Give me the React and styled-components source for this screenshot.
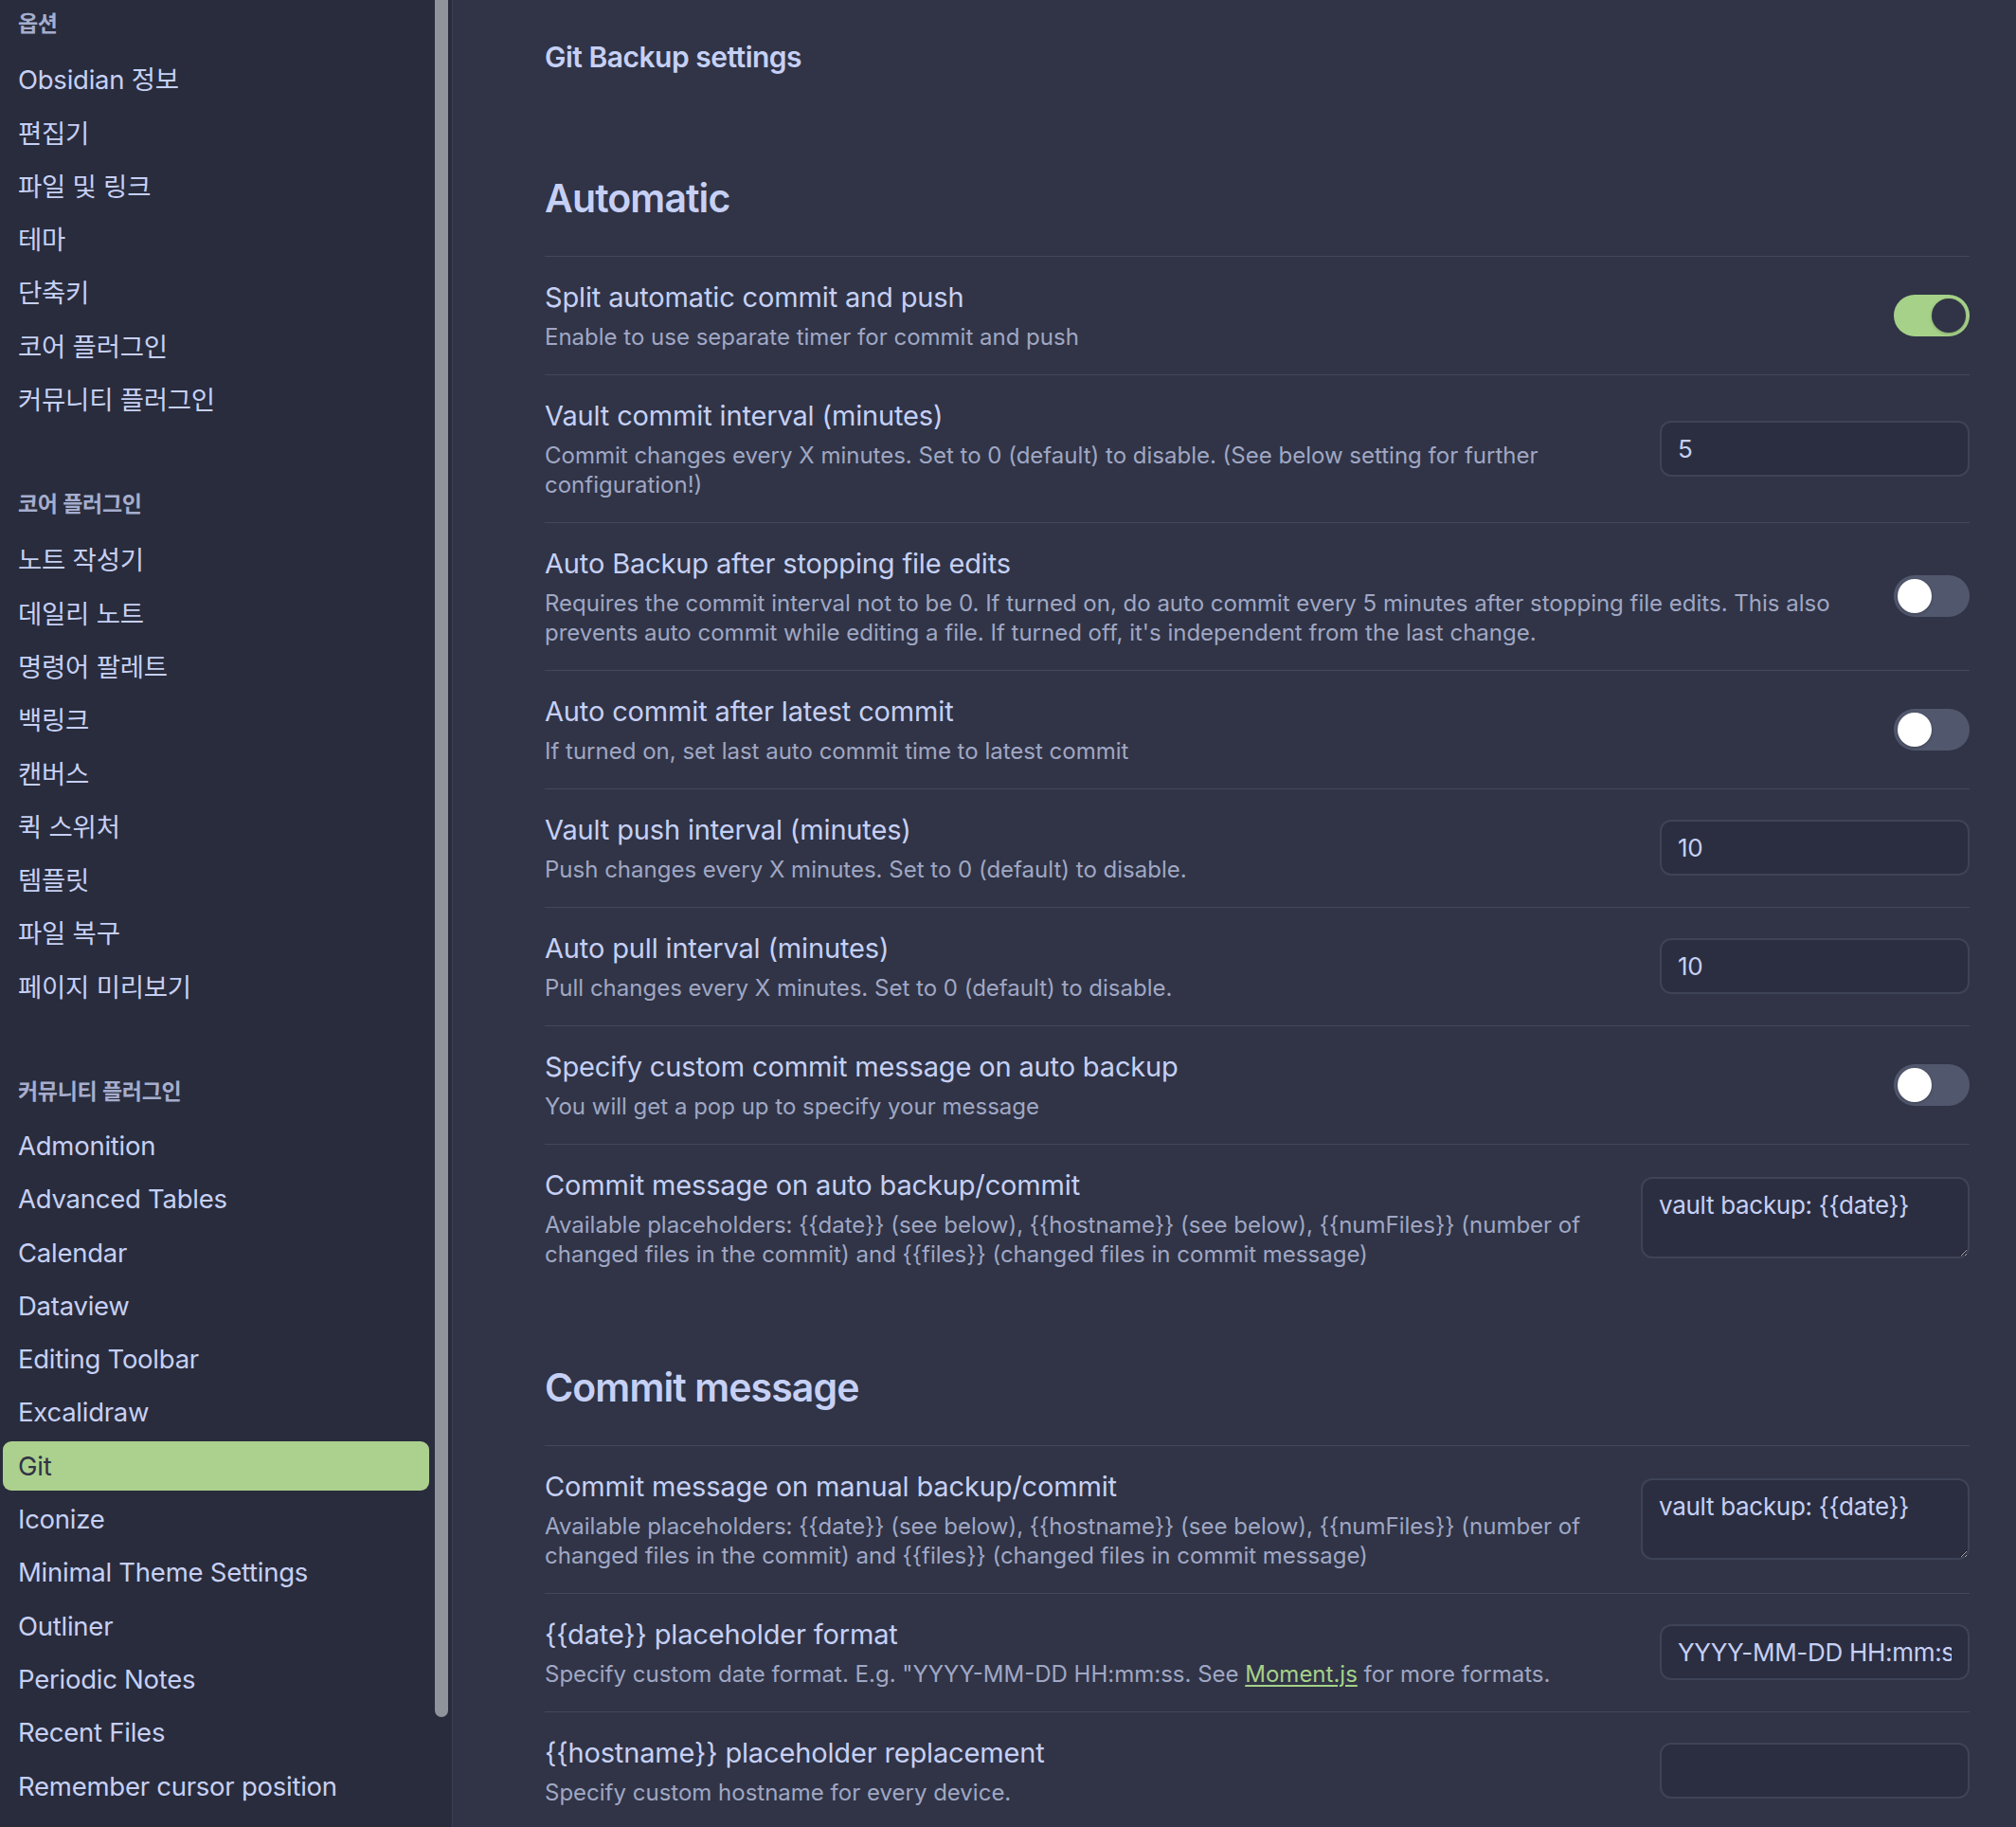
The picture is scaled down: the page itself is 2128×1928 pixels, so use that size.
import React from 'react'
import styled, { createGlobalStyle } from 'styled-components'

const GlobalStyle = createGlobalStyle`
  html, body {
    margin: 0;
    padding: 0;
    background: #303446;
  }
  body {
    font-family: Inter, "Noto Sans CJK KR", "Noto Sans", sans-serif;
    color: #c6d0f5;
    -webkit-font-smoothing: antialiased;
  }
  * {
    box-sizing: border-box;
  }
`

const Layout = styled.div`
  display: flex;
  width: 2128px;
  height: 1928px;
  overflow: hidden;
  background: #303446;
`

const Sidebar = styled.nav`
  position: relative;
  flex: 0 0 478px;
  height: 100%;
  overflow: hidden;
  background: #292c3c;
  border-right: 1px solid #3a3e51;
  padding: 0 24px 0 3px;
`

const NavGroup = styled.div`
  display: flex;
  flex-direction: column;
`

const NavHeader = styled.div`
  padding: ${(p) => (p.$first ? '9px' : '66px')} 16px 15px;
  font-size: 23px;
  line-height: 32px;
  font-weight: 600;
  letter-spacing: -0.3px;
  color: #a5adce;
`

const NavItem = styled.div`
  height: 52.5px;
  margin-bottom: 3.8px;
  padding: 0 16px;
  display: flex;
  align-items: center;
  border-radius: 9px;
  font-size: 27.5px;
  letter-spacing: -0.25px;
  white-space: nowrap;
  color: ${(p) => (p.$active ? '#303446' : '#c6d0f5')};
  background: ${(p) => (p.$active ? '#acd08d' : 'transparent')};
`

const ScrollThumb = styled.div`
  position: absolute;
  top: 0;
  right: 4px;
  width: 14px;
  height: 1812px;
  border-radius: 0 0 7px 7px;
  background: #8f939c;
`

const Main = styled.main`
  flex: 1;
  min-width: 0;
  padding: 41px 49px 0 97px;
`

const PageTitle = styled.div`
  font-size: 30px;
  line-height: 39px;
  font-weight: 600;
  letter-spacing: -0.5px;
  color: #c6d0f5;
  margin-bottom: 28px;
`

const SectionHeading = styled.h2`
  margin: 0;
  padding: 76px 0 36px;
  font-size: 41px;
  line-height: 50px;
  font-weight: 600;
  letter-spacing: -0.9px;
  color: #c6d0f5;
`

const SettingItem = styled.div`
  display: flex;
  align-items: center;
  padding: 23px 0 24px;
  border-top: 1px solid #43475a;
`

const SettingInfo = styled.div`
  flex: 1 1 auto;
  min-width: 0;
  margin-right: 32px;
`

const SettingName = styled.div`
  font-size: 29px;
  line-height: 39px;
  letter-spacing: -0.15px;
  color: #c6d0f5;
`

const SettingDesc = styled.div`
  padding-top: 7px;
  font-size: 24px;
  line-height: 31px;
  color: #a0a7c4;
  white-space: nowrap;
`

const DescLink = styled.a`
  color: #a6d189;
  text-decoration: underline;
  text-underline-offset: 3px;
`

const SettingControl = styled.div`
  flex: 0 0 auto;
  display: flex;
  align-items: center;
  justify-content: flex-end;
`

const Toggle = styled.div`
  position: relative;
  width: 80px;
  height: 44px;
  border-radius: 22px;
  background: ${(p) => (p.$on ? '#a6d189' : '#51576d')};
`

const Knob = styled.div`
  position: absolute;
  top: 4px;
  left: ${(p) => (p.$on ? '40px' : '4px')};
  width: 36px;
  height: 36px;
  border-radius: 50%;
  background: ${(p) => (p.$on ? '#303446' : '#ffffff')};
  box-shadow: 0 1px 3px rgba(0, 0, 0, 0.25);
`

const TextInput = styled.input`
  width: 327px;
  height: 59px;
  padding: 0 17px;
  border: 2px solid #3f4357;
  border-radius: 12px;
  background: #2b2e40;
  color: #c6d0f5;
  font-family: Inter, "Noto Sans", sans-serif;
  font-size: 26px;
  letter-spacing: -0.3px;
  outline: none;
`

const TextArea = styled.textarea`
  display: block;
  width: 347px;
  height: 86px;
  padding: 10px 17px;
  border: 2px solid #3f4357;
  border-radius: 12px;
  background: #2b2e40;
  color: #c6d0f5;
  color-scheme: dark;
  font-family: Inter, "Noto Sans", sans-serif;
  font-size: 26px;
  letter-spacing: -0.3px;
  line-height: 36px;
  outline: none;
  resize: both;
`

const navGroups = [
  {
    title: '옵션',
    items: ['Obsidian 정보', '편집기', '파일 및 링크', '테마', '단축키', '코어 플러그인', '커뮤니티 플러그인'],
  },
  {
    title: '코어 플러그인',
    items: ['노트 작성기', '데일리 노트', '명령어 팔레트', '백링크', '캔버스', '퀵 스위처', '템플릿', '파일 복구', '페이지 미리보기'],
  },
  {
    title: '커뮤니티 플러그인',
    items: [
      'Admonition',
      'Advanced Tables',
      'Calendar',
      'Dataview',
      'Editing Toolbar',
      'Excalidraw',
      'Git',
      'Iconize',
      'Minimal Theme Settings',
      'Outliner',
      'Periodic Notes',
      'Recent Files',
      'Remember cursor position',
    ],
  },
]

const placeholdersDesc = (
  <>
    Available placeholders: {'{{date}}'} (see below), {'{{hostname}}'} (see below), {'{{numFiles}}'} (number of
    <br />
    changed files in the commit) and {'{{files}}'} (changed files in commit message)
  </>
)

const automaticSettings = [
  {
    name: 'Split automatic commit and push',
    desc: 'Enable to use separate timer for commit and push',
    control: { type: 'toggle', on: true },
  },
  {
    name: 'Vault commit interval (minutes)',
    desc: (
      <>
        Commit changes every X minutes. Set to 0 (default) to disable. (See below setting for further
        <br />
        configuration!)
      </>
    ),
    control: { type: 'input', value: '5' },
  },
  {
    name: 'Auto Backup after stopping file edits',
    desc: (
      <>
        Requires the commit interval not to be 0. If turned on, do auto commit every 5 minutes after stopping file edits. This also
        <br />
        prevents auto commit while editing a file. If turned off, it's independent from the last change.
      </>
    ),
    control: { type: 'toggle', on: false },
  },
  {
    name: 'Auto commit after latest commit',
    desc: 'If turned on, set last auto commit time to latest commit',
    control: { type: 'toggle', on: false },
  },
  {
    name: 'Vault push interval (minutes)',
    desc: 'Push changes every X minutes. Set to 0 (default) to disable.',
    control: { type: 'input', value: '10' },
  },
  {
    name: 'Auto pull interval (minutes)',
    desc: 'Pull changes every X minutes. Set to 0 (default) to disable.',
    control: { type: 'input', value: '10' },
  },
  {
    name: 'Specify custom commit message on auto backup',
    desc: 'You will get a pop up to specify your message',
    control: { type: 'toggle', on: false },
  },
  {
    name: 'Commit message on auto backup/commit',
    desc: placeholdersDesc,
    control: { type: 'textarea', value: 'vault backup: {{date}}' },
  },
]

const commitSettings = [
  {
    name: 'Commit message on manual backup/commit',
    desc: placeholdersDesc,
    control: { type: 'textarea', value: 'vault backup: {{date}}' },
  },
  {
    name: '{{date}} placeholder format',
    desc: (
      <>
        Specify custom date format. E.g. "YYYY-MM-DD HH:mm:ss. See <DescLink href="#">Moment.js</DescLink> for more formats.
      </>
    ),
    control: { type: 'input', value: 'YYYY-MM-DD HH:mm:ss' },
  },
  {
    name: '{{hostname}} placeholder replacement',
    desc: 'Specify custom hostname for every device.',
    control: { type: 'input', value: '' },
  },
]

const Control = ({ control }) => {
  if (control.type === 'toggle') {
    return (
      <Toggle $on={control.on}>
        <Knob $on={control.on} />
      </Toggle>
    )
  }
  if (control.type === 'textarea') {
    return <TextArea readOnly spellCheck={false} value={control.value} />
  }
  return <TextInput readOnly spellCheck={false} value={control.value} />
}

const SettingList = ({ items }) =>
  items.map((item, index) => (
    <SettingItem key={index}>
      <SettingInfo>
        <SettingName>{item.name}</SettingName>
        <SettingDesc>{item.desc}</SettingDesc>
      </SettingInfo>
      <SettingControl>
        <Control control={item.control} />
      </SettingControl>
    </SettingItem>
  ))

const App = () => {
  return (
    <>
      <GlobalStyle />
      <Layout>
        <Sidebar>
          {navGroups.map((group, gi) => (
            <NavGroup key={gi}>
              <NavHeader $first={gi === 0}>{group.title}</NavHeader>
              {group.items.map((item) => (
                <NavItem key={item} $active={item === 'Git'}>
                  {item}
                </NavItem>
              ))}
            </NavGroup>
          ))}
          <ScrollThumb />
        </Sidebar>
        <Main>
          <PageTitle>Git Backup settings</PageTitle>
          <SectionHeading>Automatic</SectionHeading>
          <SettingList items={automaticSettings} />
          <SectionHeading>Commit message</SectionHeading>
          <SettingList items={commitSettings} />
        </Main>
      </Layout>
    </>
  )
}

export default App
